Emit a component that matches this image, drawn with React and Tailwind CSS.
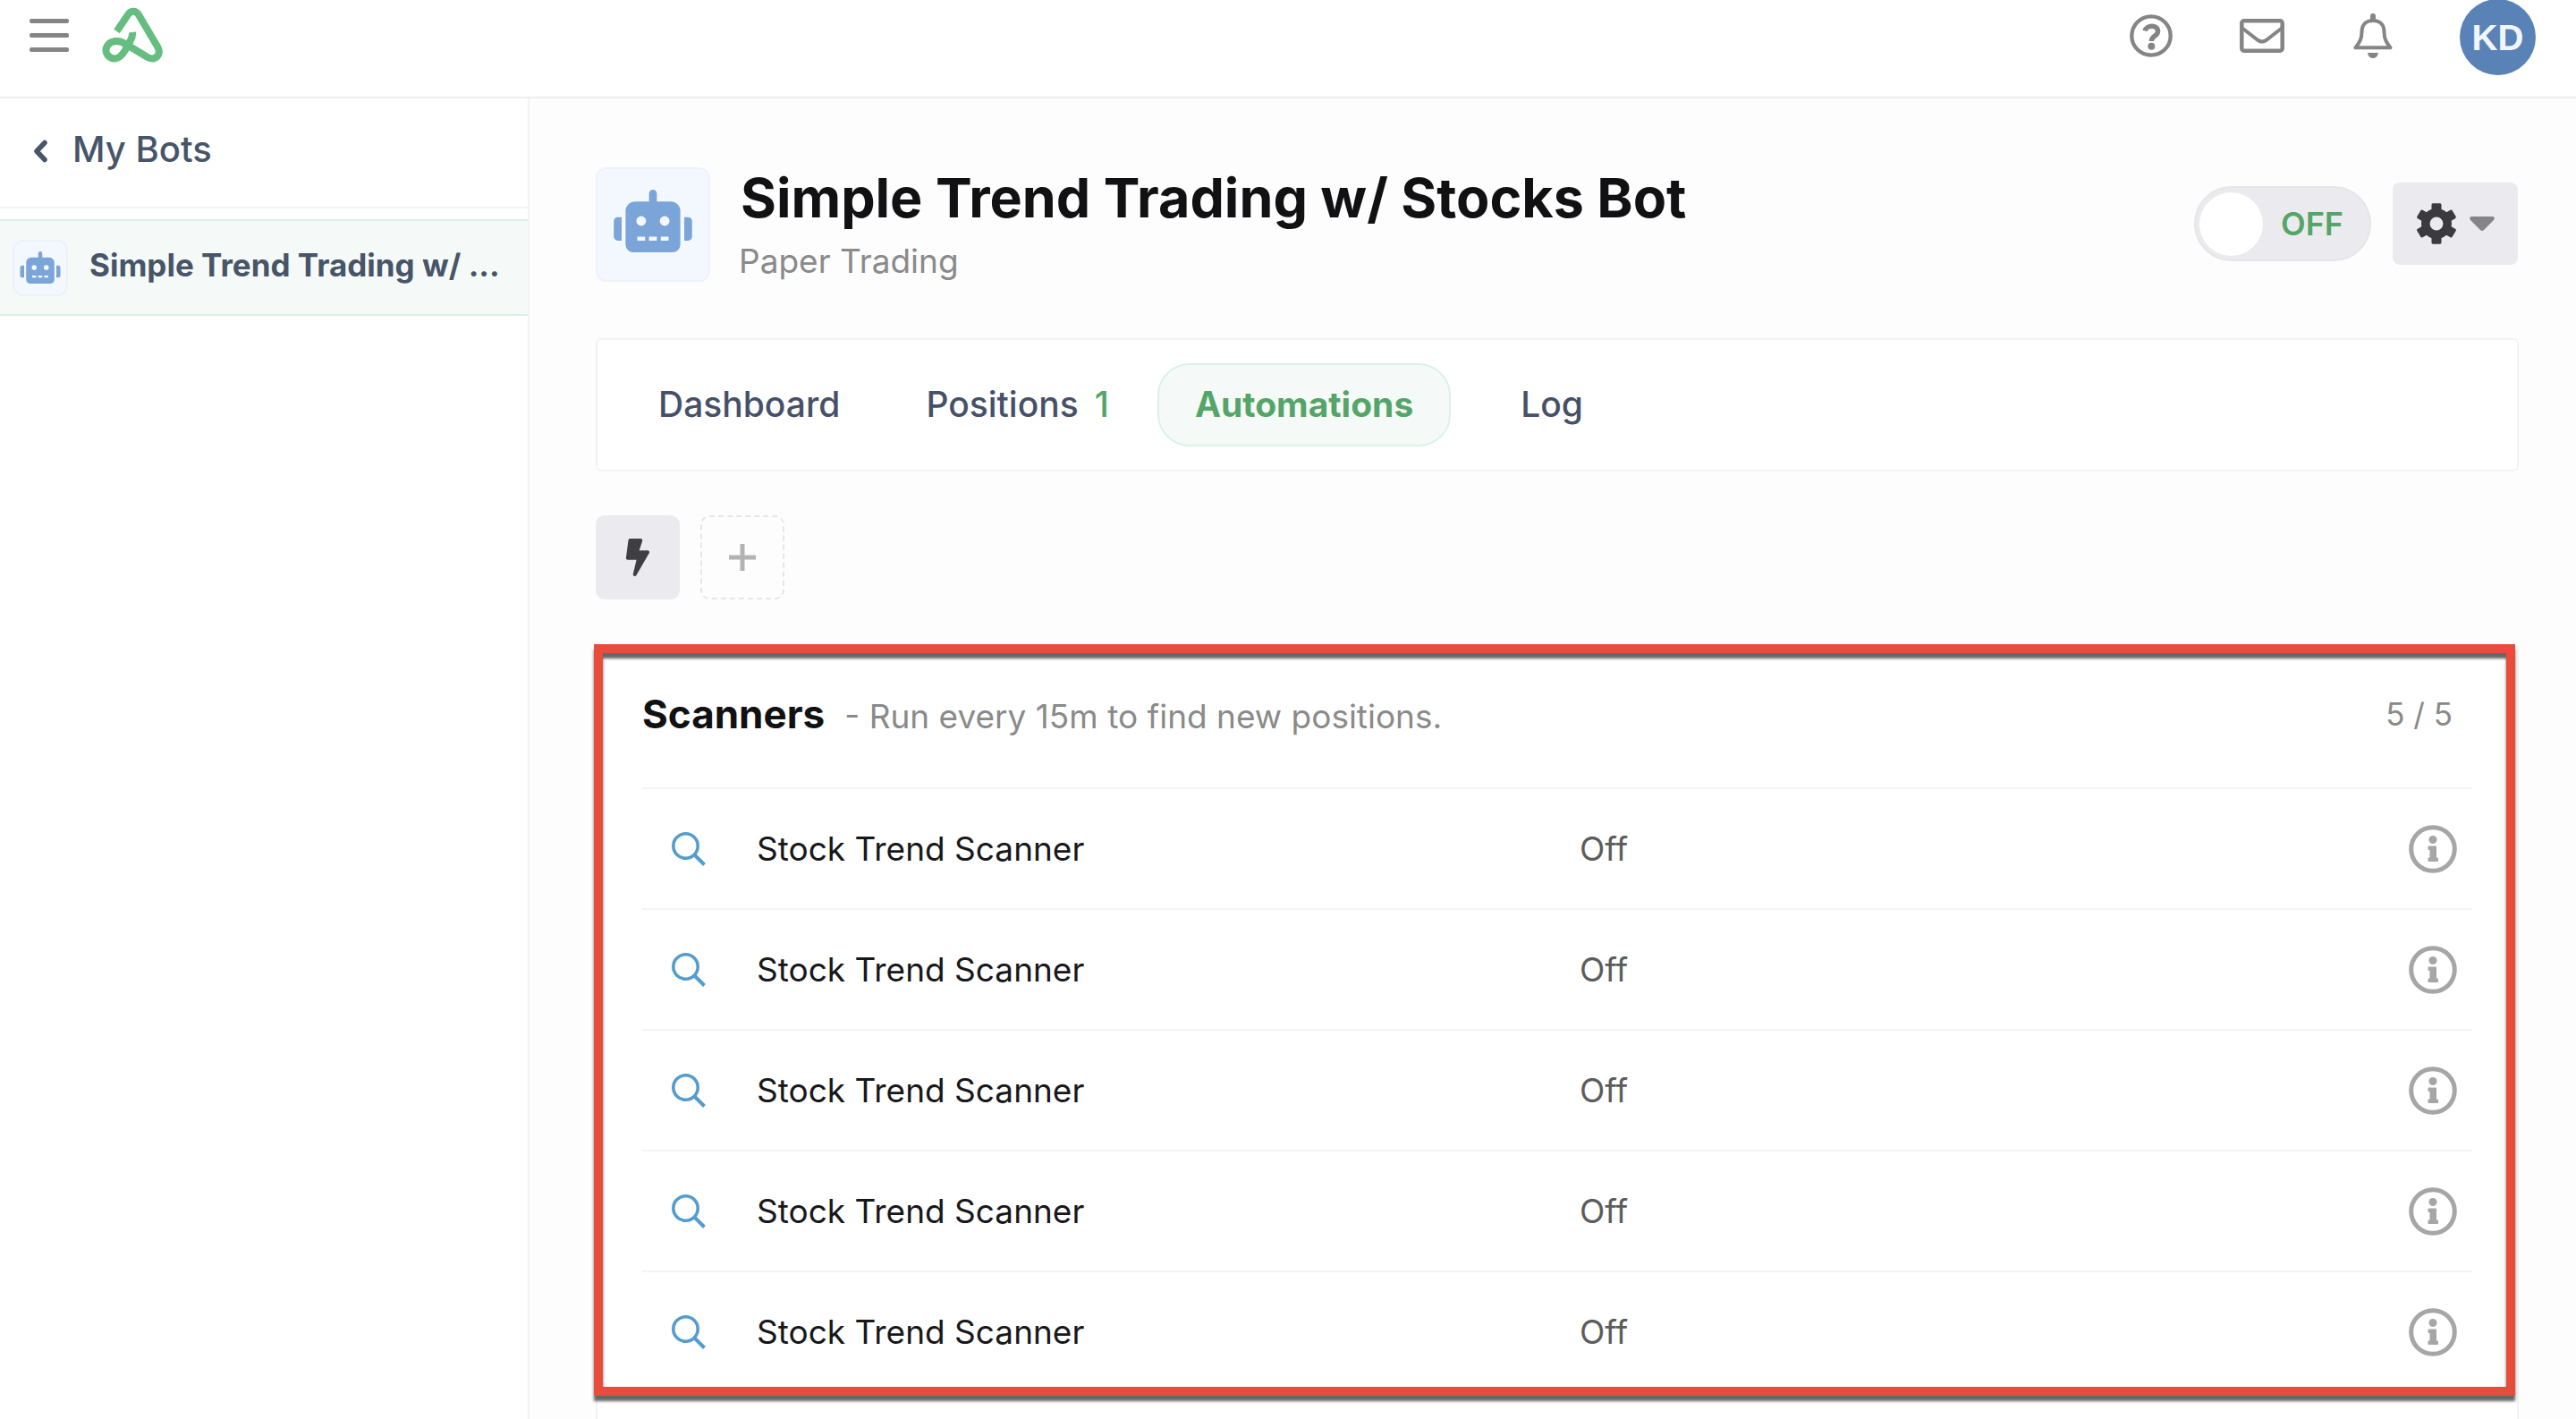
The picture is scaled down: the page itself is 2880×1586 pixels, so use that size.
import React from "react";
import { FaRobot, FaBolt } from "react-icons/fa";

const scanners = [1, 2, 3, 4, 5];
const toothAngles = [0, 60, 120, 180, 240, 300];

function Logo() {
  return (
    <svg viewBox="0 0 68 62" className="h-[62px] w-[68px]" fill="none" stroke="#66bd80" strokeWidth="8" strokeLinejoin="round" aria-label="Home">
      <path d="M16.500 27 L29 8.500 C32 3.500 38 3.500 41 8.500 L62 44 C67 53 60 60.500 51 56 L27 41.500 C19 36 10 37 6 43 C1.500 51 8 58 15 57.500 C20 57 23 53 26 48 L32 37 Q34.500 33 34 28" />
    </svg>
  );
}

function HelpIcon() {
  return (
    <svg viewBox="0 0 48 48" className="size-12" fill="none" stroke="#858585">
      <circle cx="24" cy="24" r="21.700" strokeWidth="4.300" />
      <path d="M17 18.500 C19 11.500 31.500 11.500 31.500 19 C31.500 24.500 24.300 24 24.300 30" strokeWidth="5.500" />
      <circle cx="24.300" cy="35.700" r="4" fill="#858585" stroke="none" />
    </svg>
  );
}

function MailIcon() {
  return (
    <svg viewBox="0 0 50 38" className="h-[38px] w-[50px]" fill="none" stroke="#858585" strokeWidth="4.500">
      <rect x="2.300" y="2.300" width="45.400" height="33.400" rx="2.500" />
      <path d="M3 10.500 L20.500 24 Q25 27 29.500 24 L47 10.500" strokeWidth="4" />
    </svg>
  );
}

function BellIcon() {
  return (
    <svg viewBox="0 0 44 50" className="h-[50px] w-11" fill="none" stroke="#858585">
      <path d="M22 8 C13 8 9.500 14 9.500 21 C9.500 29 6.500 33 2.500 38.300 H41.500 C37.500 33 34.500 29 34.500 21 C34.500 14 31 8 22 8 Z" strokeWidth="4" strokeLinejoin="round" />
      <path d="M22 3 V7" strokeWidth="6" strokeLinecap="round" />
      <path d="M16 44 H28 Q27 50 22 50 Q17 50 16 44 Z" fill="#858585" stroke="none" />
    </svg>
  );
}

function GearIcon() {
  return (
    <svg viewBox="0 0 46 46" className="size-[46px]" fill="#3a3a3f">
      {toothAngles.map((angle) => (
        <path key={angle} d="M17.500 11 V2 Q17.500 0.300 19 0.300 H27 Q28.500 0.300 28.500 2 V11 Z" transform={`rotate(${angle} 23 23)`} />
      ))}
      <circle cx="23" cy="23" r="12.200" fill="none" stroke="#3a3a3f" strokeWidth="9.500" />
    </svg>
  );
}

function SearchIcon() {
  return (
    <svg viewBox="0 0 38 38" className="size-[38px]" fill="none" stroke="#559cce" strokeWidth="3.600">
      <circle cx="15.500" cy="15.500" r="13.700" />
      <path d="M25 25 L36.500 36.500" strokeWidth="4" />
    </svg>
  );
}

function InfoIcon() {
  return (
    <svg viewBox="0 0 54 54" className="size-[54px]">
      <circle cx="27" cy="27" r="24.300" fill="none" stroke="#a6a6a6" strokeWidth="5" />
      <circle cx="27" cy="16.500" r="4.500" fill="#a6a6a6" />
      <path d="M22.500 23.500 H30 Q31 23.500 31 24.500 V36.500 H32 Q33 36.500 33 37.500 V40 Q33 41 32 41 H22.500 Q21.500 41 21.500 40 V37.500 Q21.500 36.500 22.500 36.500 H23.500 V28 H22.500 Q21.500 28 21.500 27 V24.500 Q21.500 23.500 22.500 23.500 Z" fill="#a6a6a6" />
    </svg>
  );
}

export default function App() {
  return (
    <div className="flex h-screen flex-col overflow-hidden bg-[#fdfdfd] font-['Inter',sans-serif] text-[#18181b]">
      <header className="flex h-[110px] shrink-0 items-start justify-between border-b-2 border-[#eeeeee] bg-white pl-[33px] pr-[45px]">
        <div className="flex items-start">
          <button aria-label="Menu" className="mt-[21px] flex h-[37px] w-11 flex-col justify-between">
            <span className="h-[5px] w-full rounded-xs bg-[#858585]" />
            <span className="h-[5px] w-full rounded-xs bg-[#858585]" />
            <span className="h-[5px] w-full rounded-xs bg-[#858585]" />
          </button>
          <a href="#" className="ml-[37px] mt-2"><Logo /></a>
        </div>
        <div className="flex h-[83px] items-center">
          <button aria-label="Help" className="-mt-1 mr-[75px]"><HelpIcon /></button>
          <button aria-label="Messages" className="-mt-1 mr-[77px]"><MailIcon /></button>
          <button aria-label="Notifications" className="-mt-1 mr-[75px]"><BellIcon /></button>
          <button className="size-[85px] rounded-full bg-[#5983b7] font-['Liberation_Sans',sans-serif] text-[40px] font-bold text-[#f2f6fc]">KD</button>
        </div>
      </header>

      <div className="flex min-h-0 flex-1">
        <aside className="w-[592px] shrink-0 border-r-2 border-[#f3f3f5] bg-white">
          <a href="#" className="flex h-[123px] items-center border-b-2 border-[#f4f4f5] pb-2 pl-[37px] text-[40px] font-medium text-[#475569]">
            <svg viewBox="0 0 16 26" className="mr-7 mt-1 h-[26px] w-4" fill="none" stroke="#475569" strokeWidth="5.500" strokeLinecap="round" strokeLinejoin="round">
              <path d="M13 3.500 L4 13 L13 22.500" />
            </svg>
            My Bots
          </a>
          <a href="#" className="mt-3 flex h-[108px] items-center border-y-2 border-[#dcf0e6] bg-[#f5faf8] pl-[14px]">
            <span className="flex h-[63px] w-[62px] shrink-0 items-center justify-center rounded-xl border-2 border-[#ecf1fa] bg-[#f3f8ff]">
              <FaRobot className="h-9 w-[46px] text-[#7ba4d8]" />
            </span>
            <span className="ml-6 whitespace-nowrap pb-[6px] text-[35px] font-bold text-[#475569]">Simple Trend Trading w/ ...</span>
          </a>
        </aside>

        <main className="flex min-w-0 flex-1 flex-col pl-[74px] pr-16 pt-[77px]">
          <div className="flex h-[128px] shrink-0">
            <div className="flex size-32 shrink-0 items-center justify-center rounded-xl border-2 border-[#edf3fb] bg-[#f3f8ff] pb-2">
              <FaRobot className="h-[70px] w-[88px] text-[#7ba4d8]" />
            </div>
            <div className="ml-8 flex-1">
              <h1 className="pl-[2px] text-[61px] font-bold leading-[68px] text-[#111113]">Simple Trend Trading w/ Stocks Bot</h1>
              <p className="text-[37px] leading-[74px] text-[#8a8a8a]">Paper Trading</p>
            </div>
            <div className="mr-[1px] mt-[17px] flex h-[92px] items-center gap-6">
              <button role="switch" aria-checked="false" className="flex h-[84px] w-[198px] items-center rounded-full border-2 border-[#e6e6e8] bg-[#ebebef] pl-1 text-[36px] font-semibold text-[#55a568]">
                <span className="mr-5 size-[71px] rounded-full bg-white" />
                OFF
              </button>
              <button aria-label="Settings" className="flex h-[92px] w-[140px] items-center justify-center gap-[14px] rounded-lg bg-[#ebebef]">
                <GearIcon />
                <svg viewBox="0 0 28 16" className="h-4 w-7" fill="#858589"><path d="M2 0 H26 Q29 1 27 4 L16 15 Q14 17 12 15 L1 4 Q-1 1 2 0 Z" /></svg>
              </button>
            </div>
          </div>

          <nav className="mt-[63px] flex h-[149px] shrink-0 items-center rounded-md border-2 border-[#f3f3f4] bg-white pl-[68px] text-[39px] font-medium text-[#475069]">
            <a href="#">Dashboard</a>
            <a href="#" className="ml-24 flex gap-[18px]">Positions <span className="text-[#55a568]">1</span></a>
            <a href="#" className="ml-[54px] flex h-[93px] items-center rounded-[36px] border-2 border-[#dcf2e6] bg-[#f5faf8] px-10 font-bold text-[#55a568]">Automations</a>
            <a href="#" className="ml-[78px]">Log</a>
          </nav>

          <div className="mt-[49px] flex shrink-0 gap-[23px]">
            <button aria-label="Automations" className="flex size-[94px] items-center justify-center rounded-[10px] bg-[#ebebef]">
              <FaBolt className="h-[42px] w-[42px] text-[#3f3f43]" />
            </button>
            <button aria-label="Add" className="flex size-[94px] items-center justify-center rounded-[10px] border-2 border-dashed border-[#e6e6e6]">
              <svg viewBox="0 0 30 30" className="size-[30px]" stroke="#b3b3b3" strokeWidth="5"><path d="M0 15 H30 M15 0 V30" /></svg>
            </button>
          </div>

          <div className="relative mt-[51px] h-[1000px] shrink-0 rounded-md border-2 border-[#f3f3f4] bg-white">
            <div className="pointer-events-none absolute -left-1 right-[2px] -top-[3px] h-[840px] border-[10px] border-[#e84c3d] shadow-[0_6px_3px_#666666,inset_0_6px_3px_#666666]" />
            <section className="px-[50px]">
              <div className="flex h-[157px] items-baseline pt-[42px]">
                <h2 className="text-[44px] font-bold leading-[66px] text-[#111113]">Scanners</h2>
                <p className="ml-[22px] text-[37px] text-[#8a8a8a]">- Run every 15m to find new positions.</p>
                <span className="ml-auto mr-[22px] self-start text-[35px] leading-[66px] text-[#8a8a8a]">5 / 5</span>
              </div>
              <ul>
                {scanners.map((id) => (
                  <li key={id} className="grid h-[135px] grid-cols-[128px_920px_1fr_auto] items-center border-t-2 border-[#f4f4f4] text-[37px]">
                    <span className="pl-[33px]"><SearchIcon /></span>
                    <span>Stock Trend Scanner</span>
                    <span className="text-[#5c5c5c]">Off</span>
                    <button aria-label="Scanner details" className="mr-[17px]"><InfoIcon /></button>
                  </li>
                ))}
              </ul>
            </section>
          </div>
        </main>
      </div>
    </div>
  );
}
